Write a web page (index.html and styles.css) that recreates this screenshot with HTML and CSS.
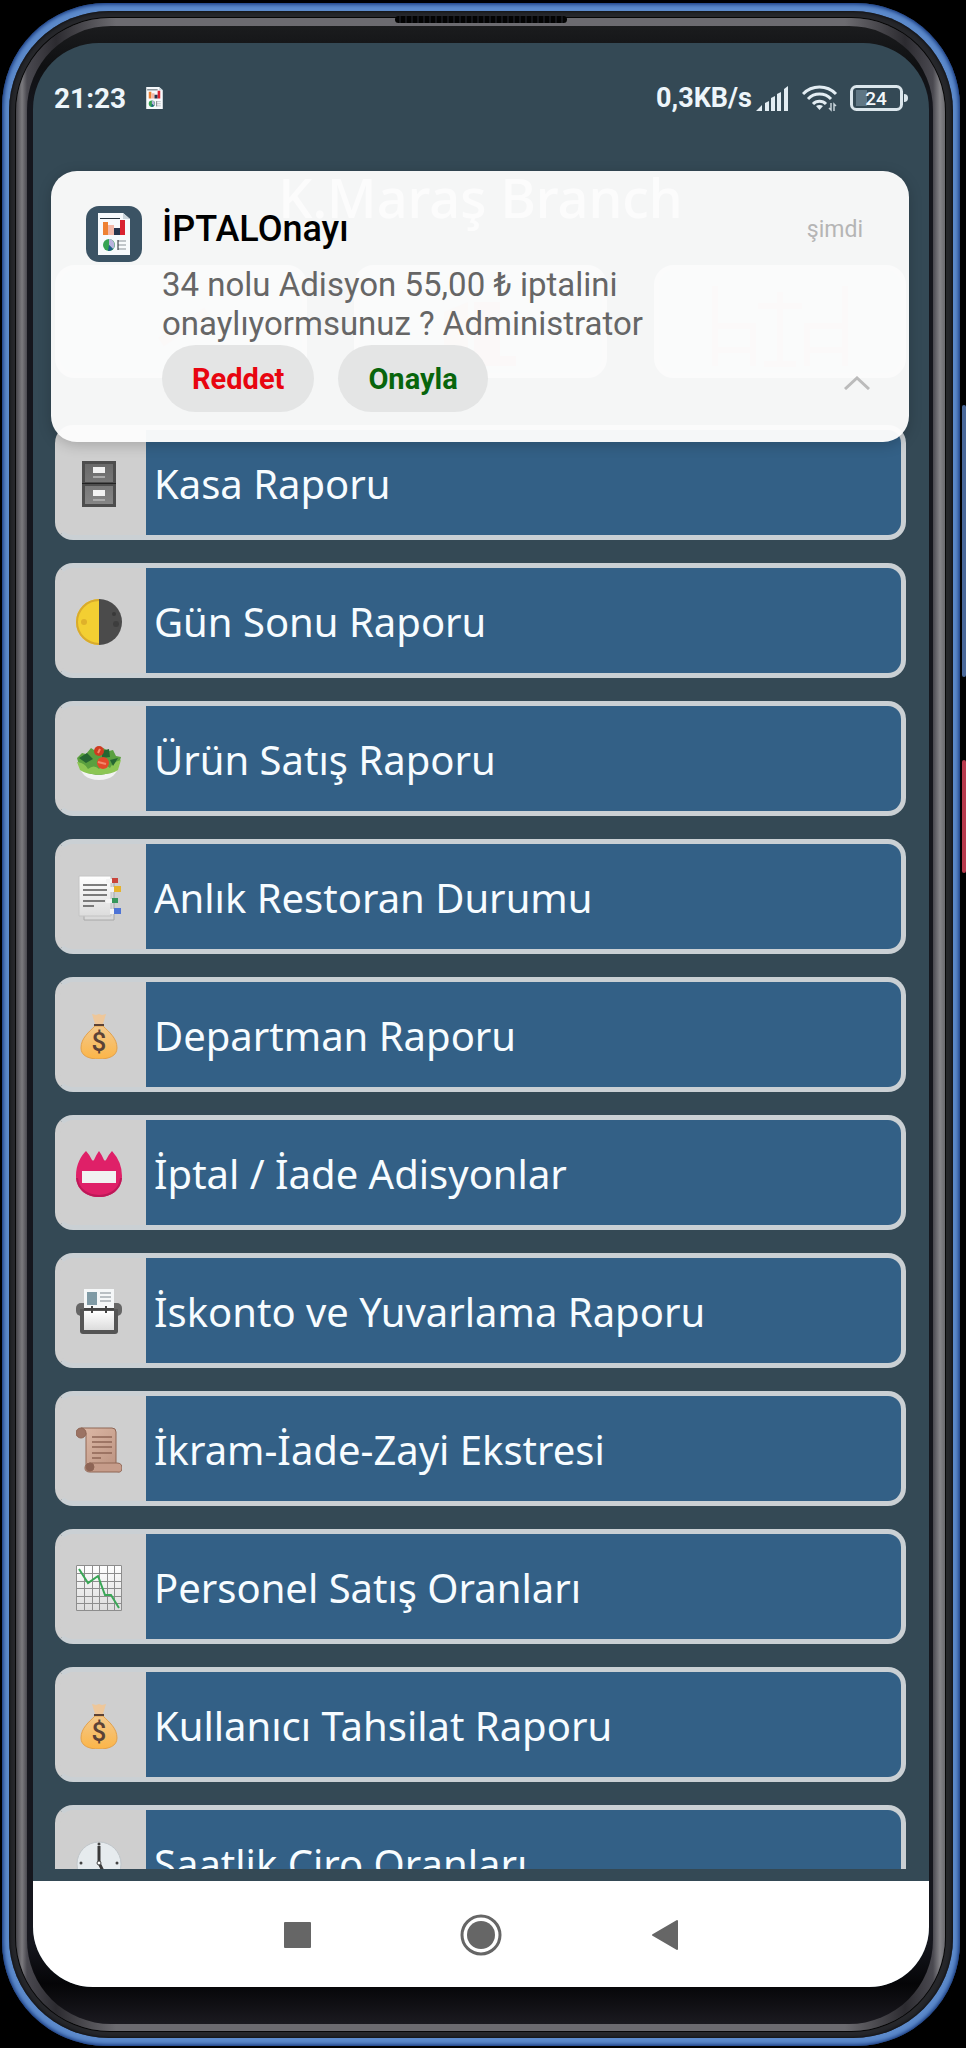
FILE: index.html
```html
<!DOCTYPE html>
<html lang="tr">
<head>
    <meta charset="UTF-8">
    <meta name="viewport" content="width=device-width, initial-scale=1.0">
    <title>K.Maraş Branch</title>
    <link rel="stylesheet" href="styles.css">
</head>
<body>
    <!-- shared icons -->
    <svg class="sprite" aria-hidden="true">
        <defs>
            <linearGradient id="gold" x1="0" y1="0" x2="0" y2="1">
                <stop offset="0" stop-color="#f3c98c"/>
                <stop offset="1" stop-color="#fbb548"/>
            </linearGradient>
            <linearGradient id="paper" x1="0" y1="0" x2="0" y2="1">
                <stop offset="0" stop-color="#ffffff"/>
                <stop offset="1" stop-color="#dcdcdc"/>
            </linearGradient>
            <linearGradient id="steel" x1="0" y1="0" x2="0" y2="1">
                <stop offset="0" stop-color="#6a6a6a"/>
                <stop offset="1" stop-color="#858585"/>
            </linearGradient>
            <linearGradient id="parchment" x1="0" y1="0" x2="1" y2="1">
                <stop offset="0" stop-color="#ddb9a6"/>
                <stop offset="1" stop-color="#bd9482"/>
            </linearGradient>
        </defs>
        <symbol id="icon-bag" viewBox="0 0 46 46">
            <path d="M16 1l4 1 3-1 3 1 4-1-3 10h-8z" fill="#eec79a"/>
            <path d="M19 13C13 19 5 25 5 35c0 8 8 11 18 11s18-3 18-11c0-10-8-16-14-22z" fill="url(#gold)" stroke="#e2a14c"/>
            <path d="M18 11h10v2H18z" fill="#5b4237"/>
            <text x="23" y="38" text-anchor="middle" class="bag-sign">$</text>
        </symbol>
        <symbol id="icon-report" viewBox="0 0 32 42">
            <path d="M0 0h25l7 6v36H0z" fill="#f7fafc"/>
            <path d="M25 0l7 6h-7z" fill="#c9d4da"/>
            <path d="M2 5h20v1H2z" fill="#26323c"/>
            <path d="M5 9h5v13H5z" fill="#ee8132"/>
            <path d="M10 12h6v10h-6z" fill="#f3b8a8"/>
            <path d="M16 15h6v7h-6z" fill="#26344c"/>
            <path d="M22 7h5v15h-5z" fill="#d92331"/>
            <circle cx="11" cy="32" r="6" fill="#35a351"/>
            <path d="M11 32V26a6 6 0 0 1 4 10z" fill="#b9b2dd"/>
            <path d="M11 32l4 4a6 6 0 0 1-5 2z" fill="#1d5c8c"/>
            <path d="M20 28h8M20 32h8M20 36h8" stroke="#8b9399" stroke-width="1"/>
            <path d="M20 27v10" stroke="#20272c"/>
        </symbol>
    </svg>

    <div class="phone">
        <div class="rim">
            <div class="edge">
                <div class="glass">
                    <div class="screen">
                        <header class="status-bar">
                            <div class="status-left">
                                <span>21:23</span>
                                <svg class="status-app" viewBox="0 0 32 42"><use href="#icon-report"/></svg>
                            </div>
                            <div class="status-right">
                                <span>0,3KB/s</span>
                                <svg class="signal" viewBox="0 0 33 25" fill="#e3edf3">
                                    <path d="M0 25l6-6v6zM9 17l4-2v10H9zM15 12l4-2v15h-4zM21 8l4-2v19h-4zM28 3l4-3v25h-4z"/>
                                </svg>
                                <svg class="wifi" viewBox="0 0 36 28">
                                    <g fill="none" stroke="#e3edf3" stroke-width="3">
                                        <path d="M1 10a23 23 0 0 1 33 0"/>
                                        <path d="M6 15a16 16 0 0 1 23 0"/>
                                        <path d="M11 20a9 9 0 0 1 13 0"/>
                                    </g>
                                    <path d="M14 22q3.500-2 7 0l-3.500 4z" fill="#e3edf3"/>
                                    <path d="M29 19v7l-2-2M32 27v-7l2 2" fill="none" stroke="#c5d1d8" stroke-width="1.500"/>
                                </svg>
                                <svg class="battery" viewBox="0 0 58 26">
                                    <rect x="1.500" y="1.500" width="50" height="23" rx="5" fill="none" stroke="#dbe6ec" stroke-width="3"/>
                                    <path d="M6 5h11v16H6z" fill="#5f7684"/>
                                    <path d="M54 9q4 0 4 4t-4 4z" fill="#dbe6ec"/>
                                    <text x="26" y="20" text-anchor="middle" class="battery-level">24</text>
                                </svg>
                            </div>
                        </header>

                        <main class="app">
                            <h1 class="branch">K.Maraş Branch</h1>

                            <div class="tiles">
                                <a class="tile" href="#" aria-label="Ciro">
                                    <svg viewBox="0 0 140 100"><path d="M50 70L96 40" stroke="#cf9a84" stroke-width="10"/></svg>
                                </a>
                                <a class="tile" href="#" aria-label="Adisyon">
                                    <svg viewBox="0 0 140 100">
                                        <path d="M34 40l24-10v60H34z" fill="#c99a84"/>
                                        <path d="M64 30h26v54H64z" fill="#cf8a7a"/>
                                        <path d="M56 84h50v10H56z" fill="#d48272"/>
                                    </svg>
                                </a>
                                <a class="tile" href="#" aria-label="Masalar">
                                    <svg viewBox="0 0 140 100" fill="none" stroke="#d0a294" stroke-width="6">
                                        <path d="M5 14v80M5 54h38v40M5 78h38M135 14v80M135 54H97v40M135 78H97M70 20v72M48 34h44M54 92h32"/>
                                    </svg>
                                </a>
                            </div>

                            <nav class="reports">
                                <a class="report" href="#">
                                    <span class="report-icon">
                                        <svg viewBox="0 0 46 46">
                                            <path d="M6 0h34v46H6z" fill="#4d4d4d"/>
                                            <path d="M9 3h28v18H9zM9 25h28v18H9z" fill="url(#steel)"/>
                                            <path d="M17 6h12v6H17zM17 29h12v6H17z" fill="#f2f2f2"/>
                                            <path d="M17 15h12v2H17zM17 38h12v2H17z" fill="#a9a9a9"/>
                                            <path d="M6 22h34v1H6z" fill="#222"/>
                                        </svg>
                                    </span>
                                    <span class="report-name">Kasa Raporu</span>
                                </a>
                                <a class="report" href="#">
                                    <span class="report-icon">
                                        <svg viewBox="0 0 46 46">
                                            <path d="M23 0a23 23 0 0 0 0 46z" fill="#f3cf32"/>
                                            <path d="M23 1a22 22 0 0 0 0 44" fill="none" stroke="#d8aa2d" stroke-width="2"/>
                                            <path d="M23 0a23 23 0 0 1 0 46z" fill="#4b4b4b"/>
                                            <circle cx="8" cy="23" r="3" fill="#dfb12a"/>
                                            <circle cx="38" cy="15" r="2" fill="#393939"/>
                                            <circle cx="40" cy="25" r="3" fill="#3d3d3d"/>
                                        </svg>
                                    </span>
                                    <span class="report-name">Gün Sonu Raporu</span>
                                </a>
                                <a class="report" href="#">
                                    <span class="report-icon">
                                        <svg viewBox="0 0 46 46">
                                            <path d="M2 23c1 13 8 20 21 20s20-7 21-20z" fill="#f2f3f2"/>
                                            <path d="M1 21l5-5 4 1 5-6 6 4 6-4 6 3 4-1 3 6 5 1-3 11c-9 9-30 9-38 0z" fill="#5aa03f"/>
                                            <path d="M1 25q8 1 11 7 6-5 11 0 5-6 11-1 3-6 11-8l-3 10C34 39 12 39 4 33z" fill="#8cc653"/>
                                            <path d="M3 21l8-5 6 6-7 4zM26 14l7-2 1 8-8 1zM34 23l8-2-5 8z" fill="#256632"/>
                                            <circle cx="23" cy="14" r="5" fill="#cf3b20"/>
                                            <circle cx="27" cy="26" r="6" fill="#e2492a"/>
                                            <path d="M22 25l8 2M24 12l-2 4" stroke="#f2896b" stroke-width="2"/>
                                        </svg>
                                    </span>
                                    <span class="report-name">Ürün Satış Raporu</span>
                                </a>
                                <a class="report" href="#">
                                    <span class="report-icon">
                                        <svg viewBox="0 0 46 46">
                                            <path d="M8 6h30v39H8z" fill="#d9d9d9" stroke="#a8a8a8"/>
                                            <path d="M3 1h32v40H3z" fill="url(#paper)" stroke="#c4c4c4"/>
                                            <path d="M7 10h24M7 15h24M7 20h24M7 26h22M7 31h11" stroke="#555" stroke-width="1.500"/>
                                            <path d="M30 4h6v4h-6zM33 12h5v5h-5zM30 24h6v4h-6zM34 34h4v5h-4z" fill="#f4f4f4"/>
                                            <path d="M36 3h6v5h-6z" fill="#c9453c"/>
                                            <path d="M38 11h7v6h-7z" fill="#e6b32c"/>
                                            <path d="M36 23h6v5h-6z" fill="#37975b"/>
                                            <path d="M38 33h7v6h-7z" fill="#4e74d6"/>
                                        </svg>
                                    </span>
                                    <span class="report-name">Anlık Restoran Durumu</span>
                                </a>
                                <a class="report" href="#">
                                    <span class="report-icon"><svg viewBox="0 0 46 46"><use href="#icon-bag"/></svg></span>
                                    <span class="report-name">Departman Raporu</span>
                                </a>
                                <a class="report" href="#">
                                    <span class="report-icon">
                                        <svg viewBox="0 0 46 46">
                                            <path d="M10 0q3 3 6 9 1 1 2 0 2-5 5-9 3 4 5 9 1 1 2 0 3-6 6-9 10 11 10 25c0 13-10 21-23 21S0 38 0 25C0 13 5 5 10 0z" fill="#df2068"/>
                                            <path d="M1 27c1 11 10 18 22 18s21-7 22-18" fill="none" stroke="#bd1858" stroke-width="2"/>
                                            <path d="M6 20h34v12H6z" fill="#f1f1f1"/>
                                        </svg>
                                    </span>
                                    <span class="report-name">İptal / İade Adisyonlar</span>
                                </a>
                                <a class="report" href="#">
                                    <span class="report-icon">
                                        <svg viewBox="0 0 46 46">
                                            <rect y="14" width="46" height="13" rx="5" fill="#666"/>
                                            <path d="M8 0h30v20H8z" fill="#f5f7f8"/>
                                            <path d="M11 3h10v13H11z" fill="#7f9aa5"/>
                                            <path d="M24 4h11M24 8h11M24 12h11" stroke="#a5adb1" stroke-width="1.500"/>
                                            <path d="M4 20h38v22q0 3-3 3H7q-3 0-3-3z" fill="#555"/>
                                            <path d="M8 22h30v19H8z" fill="url(#paper)"/>
                                            <path d="M8 20h30M16 17v7M30 17v7" stroke="#444" stroke-width="2"/>
                                        </svg>
                                    </span>
                                    <span class="report-name">İskonto ve Yuvarlama Raporu</span>
                                </a>
                                <a class="report" href="#">
                                    <span class="report-icon">
                                        <svg viewBox="0 0 46 46" stroke="#8f6655" stroke-width="1">
                                            <path d="M5 1h31q4 0 4 4v34H10V6z" fill="url(#parchment)"/>
                                            <circle cx="5" cy="6" r="5" fill="#9b7363"/>
                                            <path d="M14 36h27q5 0 5 5t-5 4H14q-5 0-5-4t5-5z" fill="#c69c8a"/>
                                            <circle cx="14" cy="40" r="4" fill="#8d6455"/>
                                            <path d="M16 10h20M16 15h20M16 20h20M16 26h20M16 31h9" stroke-width="1.500"/>
                                        </svg>
                                    </span>
                                    <span class="report-name">İkram-İade-Zayi Ekstresi</span>
                                </a>
                                <a class="report" href="#">
                                    <span class="report-icon">
                                        <svg viewBox="0 0 46 46">
                                            <path d="M0 0h46v46H0z" fill="url(#paper)"/>
                                            <path d="M.5.500h45v45H.5zM8.500 0v46M16.500 0v46M23.500 0v46M31.500 0v46M38.500 0v46M0 8.500h46M0 16.500h46M0 23.500h46M0 31.500h46M0 38.500h46" fill="none" stroke="#8d8d8d"/>
                                            <path d="M3 4l9 14 10-7 7 19h6l8 13" fill="none" stroke="#3aa757" stroke-width="2"/>
                                        </svg>
                                    </span>
                                    <span class="report-name">Personel Satış Oranları</span>
                                </a>
                                <a class="report" href="#">
                                    <span class="report-icon"><svg viewBox="0 0 46 46"><use href="#icon-bag"/></svg></span>
                                    <span class="report-name">Kullanıcı Tahsilat Raporu</span>
                                </a>
                                <a class="report" href="#">
                                    <span class="report-icon">
                                        <svg viewBox="0 0 46 46">
                                            <circle cx="23" cy="23" r="22" fill="#e6ebee" stroke="#c0c6ca"/>
                                            <path d="M23 5v17l4 8" fill="none" stroke="#3a3a3a" stroke-width="3"/>
                                            <circle cx="23" cy="3" r="1.500" fill="#444"/>
                                            <circle cx="5" cy="22" r="1.500" fill="#444"/>
                                            <circle cx="41" cy="22" r="1.500" fill="#444"/>
                                            <circle cx="23" cy="22" r="2" fill="#fff" stroke="#444"/>
                                        </svg>
                                    </span>
                                    <span class="report-name">Saatlik Ciro Oranları</span>
                                </a>
                            </nav>
                        </main>

                        <footer class="nav-bar">
                            <button aria-label="Son uygulamalar">
                                <svg viewBox="0 0 42 42"><rect x="8" y="8" width="27" height="26" rx="1" fill="#666"/></svg>
                            </button>
                            <button aria-label="Ana ekran">
                                <svg viewBox="0 0 42 42">
                                    <circle cx="21" cy="21" r="19" fill="none" stroke="#666" stroke-width="3"/>
                                    <circle cx="21" cy="21" r="14" fill="#666"/>
                                </svg>
                            </button>
                            <button aria-label="Geri">
                                <svg viewBox="0 0 42 42"><path d="M33 7v28L9 21z" fill="#666" stroke="#666" stroke-width="2" stroke-linejoin="round"/></svg>
                            </button>
                        </footer>

                        <section class="notification">
                            <div class="notification-icon">
                                <svg viewBox="0 0 32 42"><use href="#icon-report"/></svg>
                            </div>
                            <div class="notification-body">
                                <div class="notification-head">
                                    <h2>İPTALOnayı</h2>
                                    <time>şimdi</time>
                                </div>
                                <p>34 nolu Adisyon 55,00 ₺ iptalini onaylıyormsunuz ? Administrator</p>
                                <div class="notification-actions">
                                    <button class="action action-reject">Reddet</button>
                                    <button class="action action-approve">Onayla</button>
                                    <button class="collapse" aria-label="Daralt">
                                        <svg viewBox="0 0 26 14"><path d="M1 13L13 2l12 11" fill="none" stroke="#bbb" stroke-width="3"/></svg>
                                    </button>
                                </div>
                            </div>
                        </section>
                    </div>
                </div>
            </div>
        </div>
        <div class="speaker"></div>
        <div class="side-key volume-key"></div>
        <div class="side-key power-key"></div>
    </div>
</body>
</html>
```
FILE: styles.css
```css
* {
    box-sizing: border-box;
}

body {
    margin: 0;
    height: 100vh;
    padding: 3px 6px 2px 2px;
    background: #000;
    font-family: Roboto, sans-serif;
    overflow: hidden;
}

a {
    color: inherit;
    text-decoration: none;
}

button {
    border: none;
    padding: 0;
    background: none;
    font-family: inherit;
    cursor: pointer;
}

svg {
    display: block;
}

.sprite {
    position: absolute;
    width: 0;
    height: 0;
}

/* phone body, from the outside in */
.phone {
    position: relative;
    height: 100%;
    padding: 8px 7px;
    border-radius: 104px;
    background: #5c8acb;
    box-shadow: inset 0 0 4px 1px #06256b;
}

.rim {
    height: 100%;
    padding: 7px 8px 7px 7px;
    border-radius: 100px;
    background: #26272b;
    box-shadow: inset 0 0 3px 1px #101115;
}

.edge {
    height: 100%;
    padding: 8px 12px 7px 11px;
    border-radius: 94px;
    background: linear-gradient(90deg, #45444a, #7b7a7e 6px, #4a4950 11px, #2c2b30 40px, #6c6b70 100px, #6c6b70 calc(100% - 100px), #2c2b30 calc(100% - 40px), #4a4950 calc(100% - 12px), #858488 calc(100% - 5px), #6a696e);
    box-shadow: 0 0 0 1px #060606;
}

.glass {
    height: 100%;
    padding: 17px 4px 37px 6px;
    border-radius: 84px;
    background: linear-gradient(#1b1c1e, #0f1012 40px, #15161d 80px, #15161d 96%, #050507 98%, #1b1a20);
}

.screen {
    position: relative;
    display: flex;
    flex-direction: column;
    height: 100%;
    border-radius: 66px 66px 60px 60px;
    background: #344955;
    overflow: hidden;
}

.speaker {
    position: absolute;
    top: 13px;
    left: 41%;
    right: 41%;
    height: 7px;
    border-radius: 4px;
    background: repeating-linear-gradient(90deg, #030303 0 4px, #15161a 4px 6px);
}

.side-key {
    position: absolute;
    right: -6px;
    width: 4px;
    border-radius: 2px;
}

.volume-key {
    top: 402px;
    height: 272px;
    background: #4a6899;
}

.power-key {
    top: 757px;
    height: 113px;
    background: #b83a4c;
}

/* status bar */
.status-bar {
    display: flex;
    justify-content: space-between;
    align-items: center;
    height: 110px;
    padding: 0 21px;
    color: #edf5fa;
    font-size: 28px;
    font-weight: 700;
}

.status-left,
.status-right {
    display: flex;
    align-items: center;
}

.status-left {
    gap: 20px;
}

.status-app {
    width: 17px;
    height: 22px;
}

.status-right {
    font-size: 27px;
}

.signal {
    width: 33px;
    height: 25px;
    margin: 0 13px 0 4px;
}

.wifi {
    width: 36px;
    height: 28px;
    margin-right: 12px;
}

.battery {
    width: 58px;
    height: 26px;
}

.battery-level {
    font-size: 19px;
    font-weight: 500;
    fill: #f3f8fb;
}

/* application */
.app {
    flex: 1;
    min-height: 0;
    display: flex;
    flex-direction: column;
    padding: 0 23px 12px 22px;
    font-family: "Noto Sans", sans-serif;
    color: #f7fcff;
}

.branch {
    margin: 0 0 24px;
    font-size: 54px;
    line-height: 88px;
    font-weight: 500;
    text-align: center;
    color: #fff;
}

.tiles {
    display: grid;
    grid-template-columns: repeat(3, 1fr);
    gap: 47px;
    margin-bottom: 47px;
}

.tile {
    display: flex;
    justify-content: center;
    align-items: center;
    height: 113px;
    border: 5px solid #d4dbe0;
    border-radius: 20px;
    background: #b9c8d6;
}

.tile svg {
    width: 140px;
    height: 100px;
}

.reports {
    flex: 1;
    min-height: 0;
    display: flex;
    flex-direction: column;
    gap: 23px;
    overflow: hidden;
}

.report {
    flex: none;
    display: flex;
    height: 115px;
    border: 5px solid #cad0d4;
    border-left-color: #cfcfcf;
    border-radius: 18px;
    background: linear-gradient(90deg, #cfcfcf 86px, #336086 86px);
}

.report-icon {
    display: flex;
    justify-content: center;
    align-items: center;
    width: 86px;
    padding: 2px 8px 0 0;
}

.report-icon svg {
    width: 46px;
    height: 46px;
}

.report-name {
    padding: 1px 0 0 8px;
    font-size: 40px;
    line-height: 105px;
    white-space: nowrap;
}

.bag-sign {
    font-family: Roboto, sans-serif;
    font-size: 26px;
    font-weight: 500;
    fill: #5b4237;
}

/* system navigation */
.nav-bar {
    display: flex;
    justify-content: center;
    align-items: center;
    gap: 142px;
    height: 106px;
    padding-top: 2px;
    background: #fff;
}

.nav-bar svg {
    width: 42px;
    height: 42px;
}

/* heads-up notification */
.notification {
    position: absolute;
    top: 128px;
    left: 18px;
    right: 20px;
    display: flex;
    gap: 20px;
    height: 271px;
    padding: 35px 35px 0;
    border-radius: 26px;
    background: rgba(252, 252, 252, 0.97);
    box-shadow: 0 3px 14px rgba(0, 0, 0, 0.2);
}

.notification-icon {
    flex: none;
    display: flex;
    justify-content: center;
    align-items: center;
    width: 56px;
    height: 56px;
    border-radius: 13px;
    background: #3b5364;
}

.notification-icon svg {
    width: 32px;
    height: 42px;
}

.notification-body {
    flex: 1;
}

.notification-head {
    display: flex;
    justify-content: space-between;
    align-items: center;
    height: 46px;
    padding-right: 11px;
}

.notification-head h2 {
    margin: 0;
    font-size: 36px;
    font-weight: 500;
    color: #000;
}

.notification-head time {
    font-size: 23px;
    color: #b5b5b5;
}

.notification-body p {
    max-width: 520px;
    margin: 13px 0 0;
    font-size: 33px;
    line-height: 39px;
    color: #666;
}

.notification-actions {
    display: flex;
    align-items: center;
    gap: 24px;
    margin-top: 2px;
}

.action {
    height: 67px;
    padding: 0 30px;
    border-radius: 34px;
    background: #e4e5e5;
    font-size: 29px;
    font-weight: 700;
}

.action-reject {
    color: #e80510;
}

.action-approve {
    color: #08650c;
}

.collapse {
    margin-left: auto;
    padding: 8px 4px 0 0;
}

.collapse svg {
    width: 26px;
    height: 14px;
}
```
